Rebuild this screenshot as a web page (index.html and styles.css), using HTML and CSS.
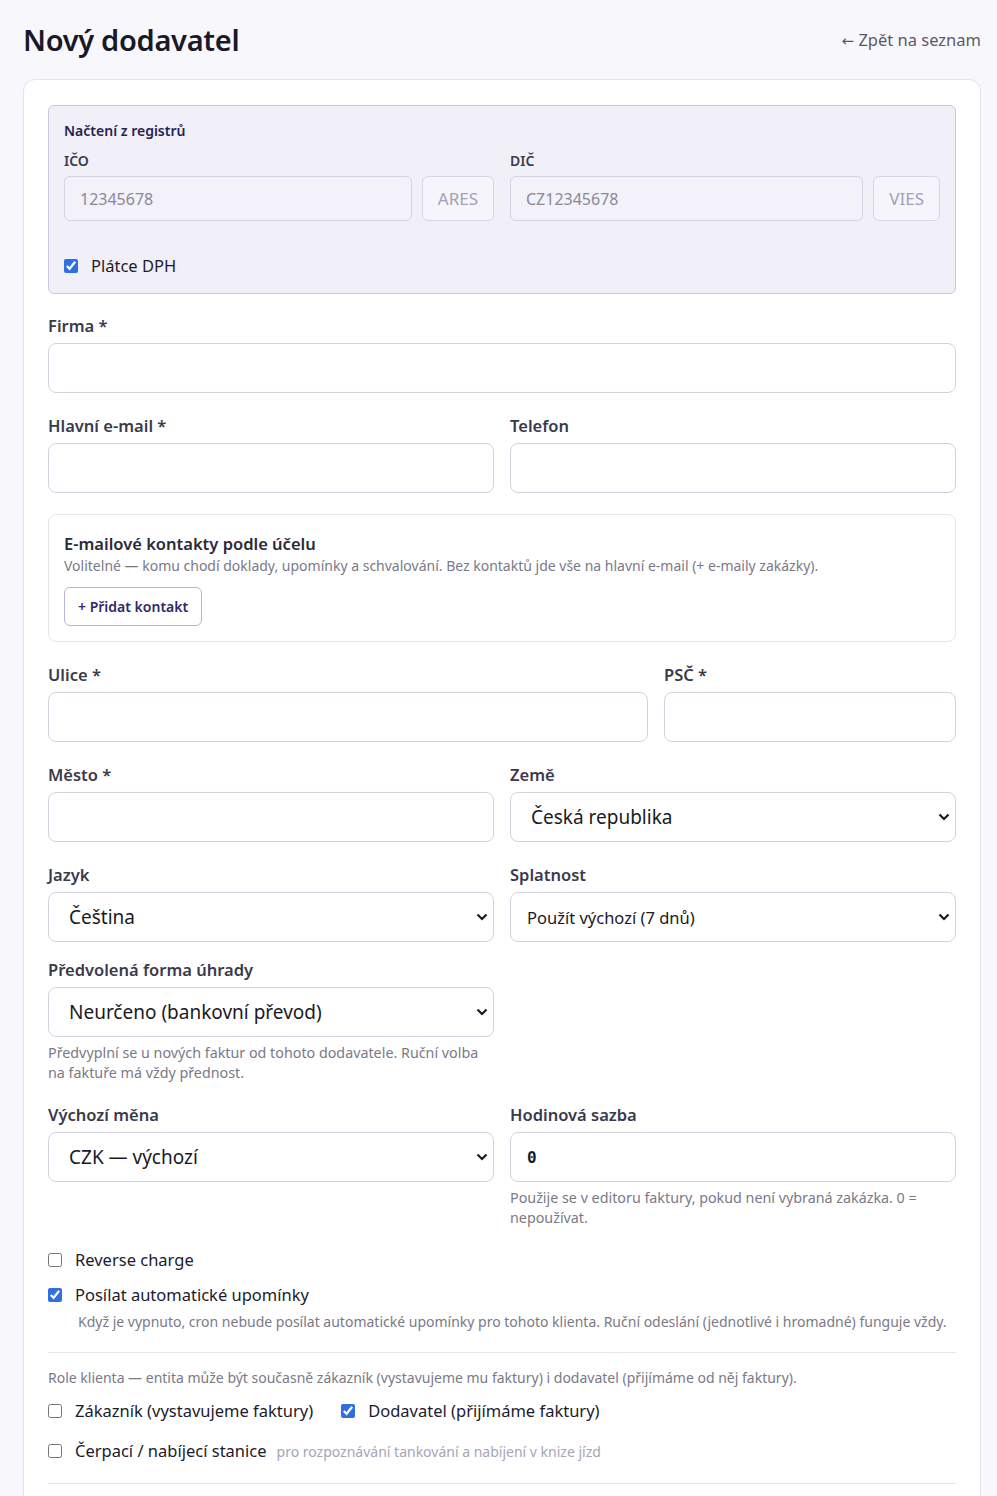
FILE: index.html
```html
<!DOCTYPE html>
<html lang="cs">
<head>
    <meta charset="UTF-8">
    <meta name="viewport" content="width=device-width, initial-scale=1.0">
    <title>Nový dodavatel</title>
    <link rel="stylesheet" href="styles.css">
</head>
<body>
    <header class="page-head">
        <h1>Nový dodavatel</h1>
        <a class="back" href="#"><span class="arrow">←</span> Zpět na seznam</a>
    </header>

    <main class="card">
        <section class="registry">
            <div class="registry-title">Načtení z registrů</div>
            <div class="cols-2 registry-row">
                <div>
                    <label class="reg-label">IČO</label>
                    <div class="lookup">
                        <input class="reg-input" type="text" placeholder="12345678">
                        <button class="reg-btn" type="button">ARES</button>
                    </div>
                </div>
                <div>
                    <label class="reg-label">DIČ</label>
                    <div class="lookup">
                        <input class="reg-input" type="text" placeholder="CZ12345678">
                        <button class="reg-btn" type="button">VIES</button>
                    </div>
                </div>
            </div>
            <label class="check"><input type="checkbox" checked> Plátce DPH</label>
        </section>

        <div class="field">
            <label>Firma *</label>
            <input class="input" type="text">
        </div>

        <div class="cols-2">
            <div class="field">
                <label>Hlavní e-mail *</label>
                <input class="input" type="email">
            </div>
            <div class="field">
                <label>Telefon</label>
                <input class="input" type="text">
            </div>
        </div>

        <section class="contacts">
            <div class="contacts-title">E-mailové kontakty podle účelu</div>
            <p class="contacts-desc">Volitelné — komu chodí doklady, upomínky a schvalování. Bez kontaktů jde vše na hlavní e-mail (+ e-maily zakázky).</p>
            <button class="add-btn" type="button">+ Přidat kontakt</button>
        </section>

        <div class="cols-3">
            <div class="field span-2">
                <label>Ulice *</label>
                <input class="input" type="text">
            </div>
            <div class="field">
                <label>PSČ *</label>
                <input class="input" type="text">
            </div>
        </div>

        <div class="cols-2">
            <div class="field">
                <label>Město *</label>
                <input class="input" type="text">
            </div>
            <div class="field">
                <label>Země</label>
                <div class="select-wrap">
                    <select class="select big"><option>Česká republika</option></select>
                    <svg class="chev" viewBox="0 0 12 8"><path d="M1.5 1.5 6 6l4.5-4.5"/></svg>
                </div>
            </div>
        </div>

        <div class="cols-2 short">
            <div class="field">
                <label>Jazyk</label>
                <div class="select-wrap">
                    <select class="select big"><option>Čeština</option></select>
                    <svg class="chev" viewBox="0 0 12 8"><path d="M1.5 1.5 6 6l4.5-4.5"/></svg>
                </div>
            </div>
            <div class="field">
                <label>Splatnost</label>
                <div class="select-wrap">
                    <select class="select"><option>Použít výchozí (7 dnů)</option></select>
                    <svg class="chev" viewBox="0 0 12 8"><path d="M1.5 1.5 6 6l4.5-4.5"/></svg>
                </div>
            </div>
        </div>

        <div class="cols-2">
            <div class="field">
                <label>Předvolená forma úhrady</label>
                <div class="select-wrap">
                    <select class="select big"><option>Neurčeno (bankovní převod)</option></select>
                    <svg class="chev" viewBox="0 0 12 8"><path d="M1.5 1.5 6 6l4.5-4.5"/></svg>
                </div>
                <p class="help">Předvyplní se u nových faktur od tohoto dodavatele. Ruční volba na faktuře má vždy přednost.</p>
            </div>
        </div>

        <div class="cols-2">
            <div class="field">
                <label>Výchozí měna</label>
                <div class="select-wrap">
                    <select class="select big"><option>CZK — výchozí</option></select>
                    <svg class="chev" viewBox="0 0 12 8"><path d="M1.5 1.5 6 6l4.5-4.5"/></svg>
                </div>
            </div>
            <div class="field">
                <label>Hodinová sazba</label>
                <input class="input mono" type="text" value="0">
                <p class="help">Použije se v editoru faktury, pokud není vybraná zakázka. 0 = nepoužívat.</p>
            </div>
        </div>

        <label class="check"><input type="checkbox"> Reverse charge</label>
        <label class="check second"><input type="checkbox" checked> Posílat automatické upomínky</label>
        <p class="check-help">Když je vypnuto, cron nebude posílat automatické upomínky pro tohoto klienta. Ruční odeslání (jednotlivé i hromadné) funguje vždy.</p>

        <hr>

        <p class="roles-desc">Role klienta — entita může být současně zákazník (vystavujeme mu faktury) i dodavatel (přijímáme od něj faktury).</p>
        <div class="roles">
            <label class="check"><input type="checkbox"> Zákazník (vystavujeme faktury)</label>
            <label class="check"><input type="checkbox" checked> Dodavatel (přijímáme faktury)</label>
        </div>
        <div class="station">
            <label class="check"><input type="checkbox"> Čerpací / nabíjecí stanice</label>
            <span class="station-hint">pro rozpoznávání tankování a nabíjení v knize jízd</span>
        </div>

        <hr>
    </main>
</body>
</html>
```

FILE: styles.css
```css
* {
    margin: 0;
    padding: 0;
    box-sizing: border-box;
}
body {
    font-family: "Noto Sans", "Open Sans", sans-serif;
    background-color: #f8f8fc;
    color: #1c1b2b;
    padding: 0 16px 0 23px;
}
.page-head {
    display: flex;
    align-items: center;
    justify-content: space-between;
    height: 79px;
}
.page-head h1 {
    font-size: 29px;
    font-weight: 600;
    color: #1a1929;
    letter-spacing: -0.3px;
}
.back {
    font-size: 16.5px;
    color: #5b5a6b;
    text-decoration: none;
}
.back .arrow {
    font-family: "DejaVu Sans", sans-serif;
    font-size: 15px;
}
.card {
    background-color: #ffffff;
    border: 1px solid #e4e3ec;
    border-radius: 12px;
    padding: 25px 24px 40px;
}

/* registry */
.registry {
    background-color: #f1f0f9;
    border: 1px solid #c9c6e0;
    border-radius: 6px;
    padding: 15px;
    margin-bottom: 20px;
}
.registry-title {
    font-size: 14px;
    font-weight: 600;
    color: #27234d;
    line-height: 20px;
    margin-bottom: 10px;
}
.reg-label {
    display: block;
    font-size: 14px;
    font-weight: 600;
    color: #3c3b4d;
    line-height: 20px;
    margin-bottom: 5px;
}
.registry-row {
    margin-bottom: 33px;
}
.lookup {
    display: flex;
    gap: 10px;
}
.reg-input {
    flex: 1;
    min-width: 0;
    height: 45px;
    padding: 0 15px;
    font-family: inherit;
    font-size: 16px;
    background-color: #f3f2fa;
    border: 1px solid #d4d2e4;
    border-radius: 6px;
}
.reg-input::placeholder {
    color: #8a8996;
}
.reg-btn {
    height: 45px;
    padding: 0 15px;
    font-family: inherit;
    font-size: 17px;
    color: #a19fbb;
    background-color: #f6f5fb;
    border: 1px solid #d6d4e6;
    border-radius: 6px;
}

/* fields */
.cols-2 {
    display: grid;
    grid-template-columns: 1fr 1fr;
    gap: 16px;
}
.cols-3 {
    display: grid;
    grid-template-columns: 1fr 1fr 1fr;
    gap: 16px;
}
.span-2 {
    grid-column: span 2;
}
.field {
    margin-bottom: 21px;
}
.short .field {
    margin-bottom: 16px;
}
.field label {
    display: block;
    font-size: 16.5px;
    font-weight: 600;
    color: #3b3a4c;
    line-height: 24px;
    margin-bottom: 5px;
}
.input, .select {
    width: 100%;
    height: 50px;
    font-family: inherit;
    font-size: 16.5px;
    color: #1b1a24;
    background-color: #ffffff;
    border: 1px solid #d3d2de;
    border-radius: 8px;
    padding: 0 16px;
}
.input.mono {
    font-family: "DejaVu Sans Mono", monospace;
    font-size: 16px;
    font-weight: 600;
}
.select-wrap {
    position: relative;
}
.select {
    appearance: none;
    -webkit-appearance: none;
    padding-right: 40px;
}
.select.big {
    font-size: 19px;
    padding-left: 20px;
}
.chev {
    position: absolute;
    right: 6px;
    top: 21px;
    width: 12px;
    height: 8px;
    fill: none;
    stroke: #1b1a24;
    stroke-width: 2.2;
    pointer-events: none;
}
.help {
    font-size: 14.3px;
    line-height: 20px;
    color: #7a7987;
    margin-top: 6px;
}
.cols-2 .field:has(.help) {
    margin-bottom: 20px;
}

/* contacts */
.contacts {
    border: 1px solid #e6e5ec;
    border-radius: 8px;
    padding: 17px 15px 15px;
    margin: 0 0 21px;
}
.contacts-title {
    font-size: 16.5px;
    font-weight: 600;
    color: #2b2a3a;
    line-height: 24px;
}
.contacts-desc {
    font-size: 14px;
    color: #7a7987;
    line-height: 20px;
    margin-bottom: 11px;
}
.add-btn {
    height: 39px;
    padding: 0 13px;
    font-family: inherit;
    font-size: 14px;
    font-weight: 600;
    color: #2f2a68;
    background-color: #ffffff;
    border: 1px solid #b9b3d8;
    border-radius: 6px;
}

/* checkboxes */
.check {
    display: flex;
    align-items: center;
    gap: 13px;
    font-size: 16.5px;
    line-height: 24px;
    color: #1c1b2b;
}
.check input {
    width: 14px;
    height: 14px;
    accent-color: #2f6fe0;
    margin: 0;
}
.check.second {
    margin-top: 11px;
}
.check-help {
    font-size: 14px;
    line-height: 20px;
    color: #7a7987;
    padding-left: 30px;
    margin-top: 5px;
}
hr {
    border: 0;
    border-top: 1px solid #e8e7ee;
    margin: 20px 0 15px;
}
.roles-desc {
    font-size: 14px;
    line-height: 20px;
    color: #7a7987;
}
.roles {
    display: flex;
    gap: 28px;
    margin-top: 11px;
}
.station {
    display: flex;
    align-items: center;
    gap: 10px;
    margin-top: 16px;
}
.station-hint {
    font-size: 14px;
    color: #a6a5b4;
}
```
